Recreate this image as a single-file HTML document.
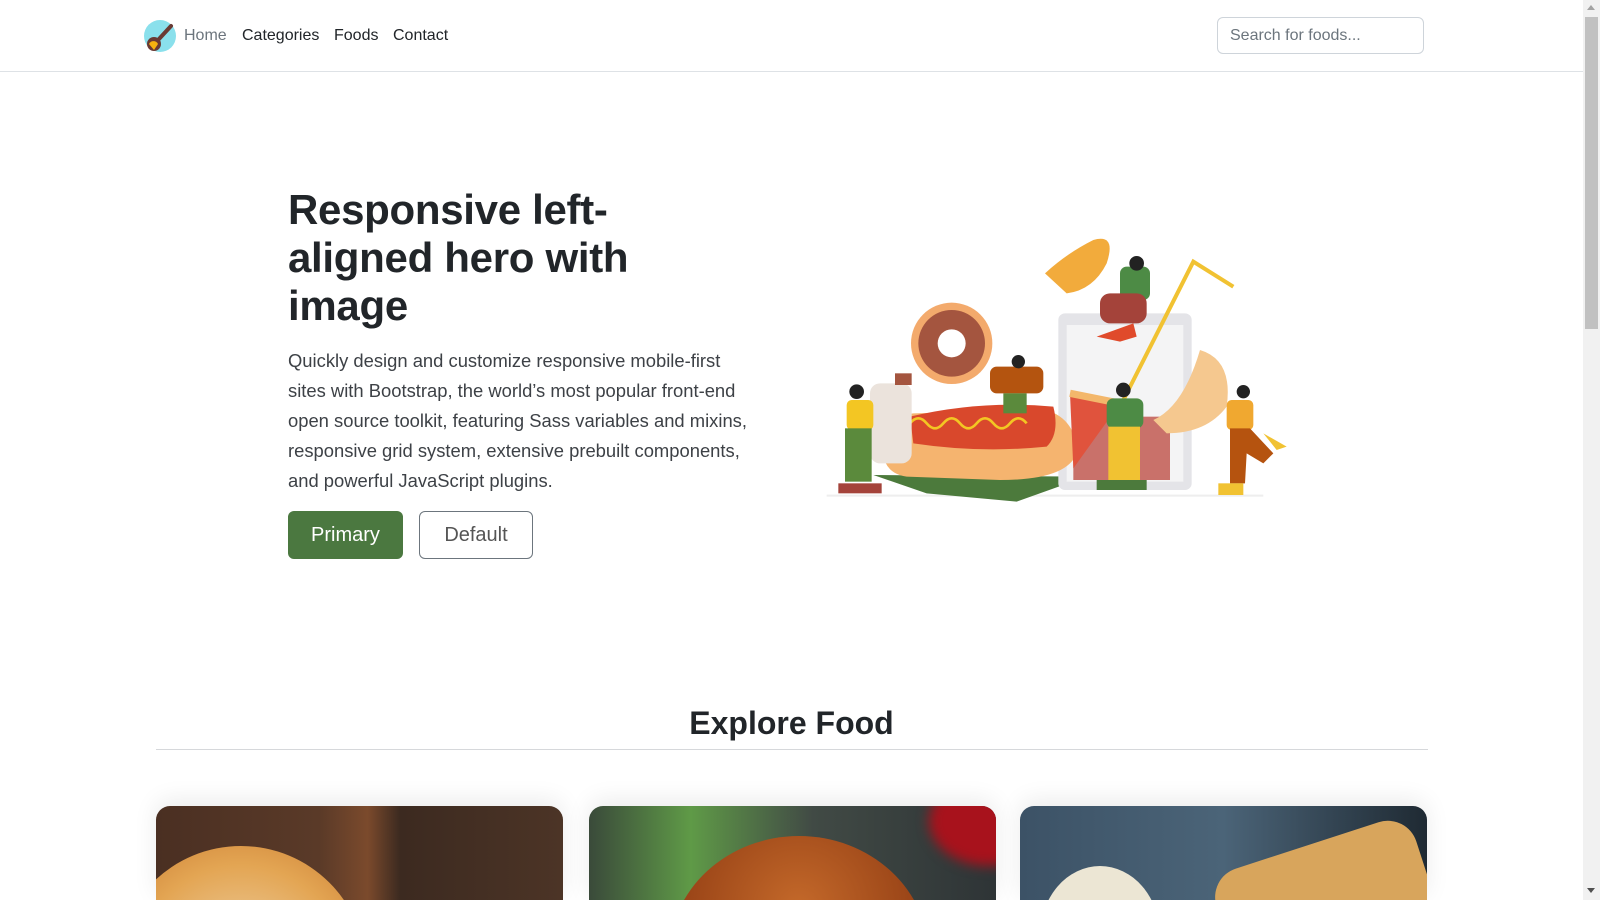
<!DOCTYPE html>
<html><head><meta charset="utf-8"><style>
*{box-sizing:border-box;margin:0;padding:0}
html,body{width:1600px;height:900px;overflow:hidden;background:#fff;font-family:"Liberation Sans",sans-serif;color:#212529}
.nav{position:absolute;left:0;top:0;width:1583px;height:72px;border-bottom:1px solid #dee2e6}
.logo{position:absolute;left:144px;top:20px;width:32px;height:32px}
.nav a{position:absolute;top:27px;font-size:16px;color:#212529;text-decoration:none}
.search{position:absolute;left:1217px;top:17px;width:207px;height:37px;border:1px solid #ced4da;border-radius:6px;padding:9px 12px;font-size:16px;color:#6c757d}
h1{position:absolute;left:288px;top:186px;width:400px;font-size:42px;line-height:48px;font-weight:bold;color:#212529;letter-spacing:-0.3px}
.lead{position:absolute;left:288px;top:346px;width:470px;font-size:18.4px;line-height:30px;color:#3d4146}
.btn{position:absolute;top:511px;height:48px;border-radius:6px;font-size:20px;display:flex;align-items:center;justify-content:center}
.b1{left:288px;width:115px;background:#4b7840;color:#fff}
.b2{left:419px;width:114px;border:1px solid #6c757d;color:#555}
h2{position:absolute;left:0;width:1583px;top:705px;text-align:center;font-size:32px;font-weight:bold;color:#212529}
.hr{position:absolute;left:156px;width:1272px;top:749px;border-top:1px solid #d6d8db}
.card{position:absolute;top:806px;width:407px;height:94px;border-radius:14px 14px 0 0;overflow:hidden;box-shadow:0 -6px 24px rgba(0,0,0,.08)}
.sb{position:absolute;left:1583px;top:0;width:17px;height:900px;background:#f1f1f1}
.th{position:absolute;left:2px;top:17px;width:13px;height:312px;background:#c1c1c1}
</style></head><body>
<div class="nav">
<svg class="logo" viewBox="0 0 32 32"><circle cx="16" cy="16" r="16" fill="#8ae0ec"/><path d="M27 6 L15 19" stroke="#6a3a34" stroke-width="4" stroke-linecap="round"/><circle cx="10" cy="24" r="7" fill="#6a3a34"/><path d="M5 24 a5 5 0 0 1 9 0 l-4 6z" fill="#f6b20f"/></svg>
<a style="left:184px;color:#6c757d">Home</a><a style="left:242px">Categories</a><a style="left:334px">Foods</a><a style="left:393px">Contact</a>
<div class="search">Search for foods...</div>
</div>
<h1>Responsive left-aligned hero with image</h1>
<div class="lead">Quickly design and customize responsive mobile-first sites with Bootstrap, the world’s most popular front-end open source toolkit, featuring Sass variables and mixins, responsive grid system, extensive prebuilt components, and powerful JavaScript plugins.</div>
<div class="btn b1">Primary</div><div class="btn b2">Default</div>
<svg style="position:absolute;left:800px;top:220px" width="500" height="300" viewBox="0 0 1500 900">
<line x1="80" y1="827" x2="1390" y2="827" stroke="#eee" stroke-width="6"/>
<polygon points="220,765 860,770 650,845 380,820" fill="#4c7a3c"/>
<rect x="775" y="280" width="400" height="530" rx="20" fill="#e4e4e8"/>
<rect x="800" y="315" width="350" height="470" fill="#f4f4f5"/>
<rect x="820" y="590" width="290" height="190" fill="#c9716a"/>
<polyline points="960,560 1180,125 1300,200" fill="none" stroke="#f1c232" stroke-width="12"/>
<circle cx="455" cy="370" r="122" fill="#f3aa6c"/><circle cx="455" cy="370" r="100" fill="#a4553f"/><circle cx="455" cy="370" r="42" fill="#fff"/>
<path d="M250 700 Q240 590 340 580 L740 570 Q830 600 830 700 Q800 780 600 780 L320 770 Q255 760 250 700z" fill="#f5b46f"/>
<path d="M330 590 Q540 540 760 560 Q780 640 740 680 Q540 700 340 670z" fill="#d9482c"/>
<path d="M330 610 q25 -30 50 0 t50 0 t50 0 t50 0 t50 0 t50 0 t50 0" fill="none" stroke="#f3c623" stroke-width="8"/>
<rect x="210" y="490" width="125" height="240" rx="30" fill="#ebe3dc"/><rect x="285" y="460" width="50" height="35" fill="#a4553f"/>
<path d="M735 160 Q800 100 880 60 Q950 40 920 130 Q880 210 800 220z" fill="#f2ab3c"/>
<path d="M1060 600 Q1150 560 1200 390 Q1300 420 1280 560 Q1220 640 1100 640z" fill="#f5c88f"/>
<polygon points="810,520 960,550 820,745" fill="#e0533d"/><path d="M810,520 L960,550" stroke="#f3b76b" stroke-width="22"/>
<rect x="140" y="540" width="80" height="90" rx="15" fill="#f3c623"/><rect x="135" y="625" width="80" height="160" fill="#5b8a3c"/><circle cx="170" cy="515" r="22" fill="#222"/><rect x="115" y="790" width="130" height="30" fill="#a4433a"/>
<rect x="570" y="440" width="160" height="80" rx="20" fill="#b4540f"/><rect x="610" y="520" width="70" height="60" fill="#5b8a3c"/><circle cx="655" cy="425" r="20" fill="#222"/>
<rect x="960" y="140" width="90" height="100" rx="20" fill="#4d8b45"/><rect x="900" y="220" width="140" height="90" rx="30" fill="#a4433a"/><polygon points="890,350 1000,310 1010,350 960,365" fill="#e04a2b"/><circle cx="1010" cy="130" r="22" fill="#222"/>
<rect x="920" y="535" width="110" height="90" rx="20" fill="#4d8b45"/><rect x="925" y="620" width="95" height="160" fill="#f1c232"/><circle cx="970" cy="510" r="22" fill="#222"/><rect x="890" y="780" width="150" height="30" fill="#4c7a3c"/>
<rect x="1280" y="540" width="80" height="90" rx="15" fill="#f0a830"/><path d="M1290 625 L1350 625 L1420 700 L1390 730 L1340 700 L1335 790 L1290 790z" fill="#b5530f"/><circle cx="1330" cy="515" r="20" fill="#222"/><rect x="1255" y="790" width="75" height="35" fill="#f1c232"/><polygon points="1390,640 1460,680 1430,690" fill="#f1c232"/>
</svg>
<h2>Explore Food</h2>
<div class="hr"></div>
<div class="card" style="left:156px;background:linear-gradient(90deg,#4a2f22 0,#5a3a28 40%,#7b4a2c 52%,#3c2a20 60%,#4c3426 100%)"><div style="position:absolute;left:-40px;top:40px;width:250px;height:250px;border-radius:50%;background:radial-gradient(#f0d7b0,#e3a553 60%,#c7782f)"></div></div>
<div class="card" style="left:589px;background:linear-gradient(90deg,#3a4a3a,#5f9a47 25%,#414a45 55%,#2e3436);"><div style="position:absolute;left:340px;top:-30px;width:120px;height:90px;border-radius:50%;background:#a8121c;filter:blur(6px)"></div><div style="position:absolute;left:80px;top:30px;width:260px;height:240px;border-radius:50%;background:radial-gradient(circle at 50% 30%,#c4692a,#8e3a12 70%)"></div></div>
<div class="card" style="left:1020px;background:linear-gradient(90deg,#3c5266,#4b6478 50%,#1f2a33)"><div style="position:absolute;left:210px;top:35px;width:210px;height:180px;border-radius:30px;background:#d8a55c;transform:rotate(-18deg)"></div><div style="position:absolute;left:20px;top:60px;width:120px;height:140px;border-radius:50%;background:#ece6d4"></div></div>
<div class="sb"><div class="th"></div><div style="position:absolute;left:4px;top:5px;border:4px solid transparent;border-bottom:5px solid #a3a3a3;border-top:0"></div><div style="position:absolute;left:4px;top:888px;border:4px solid transparent;border-top:5px solid #505050;border-bottom:0"></div></div>
</body></html>
